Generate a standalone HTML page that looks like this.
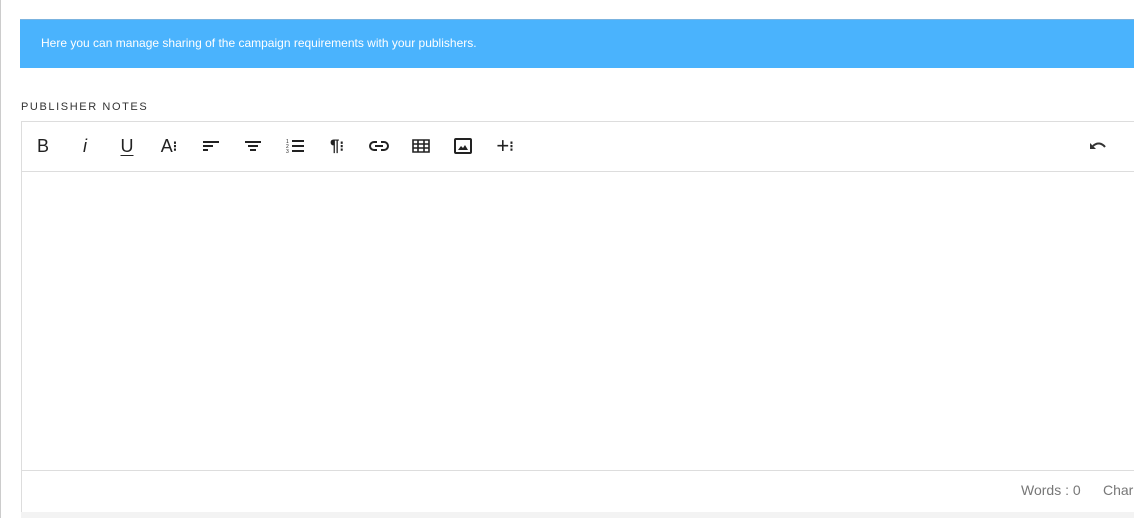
<!DOCTYPE html>
<html><head><style>
html,body{overflow:hidden}
body{margin:0;width:1134px;height:518px;background:#fff;font-family:"Liberation Sans",sans-serif;position:relative}
.lb{position:absolute;left:0;top:0;width:1px;height:518px;background:#ccc}
.banner{position:absolute;left:20px;top:19px;width:1114px;height:49px;background:#4ab3fd;border-top:1px solid #7bb3df;box-sizing:border-box;color:#fff;font-size:12px;line-height:47px;padding-left:21px}
.label{position:absolute;left:21px;top:101px;font-size:11px;letter-spacing:1.6px;color:#333}
.ed{position:absolute;left:21px;top:121px;width:1113px;height:392px;border:1px solid #ddd;border-right:none;box-sizing:border-box;overflow:hidden}
.tb{position:absolute;left:0;top:0;right:0;height:49px;border-bottom:1px solid #ddd}
.ft{position:absolute;left:0;bottom:0;right:0;height:41px;border-top:1px solid #ddd;font-size:14px;color:#777;white-space:nowrap}
.ic{position:absolute;top:13px;width:22px;height:22px;display:flex;align-items:center;justify-content:center;color:#222;font-size:18px}
.grey{position:absolute;left:21px;top:512px;width:1113px;height:6px;background:#f3f3f3}
</style></head><body>
<div class="lb"></div>
<div class="banner">Here you can manage sharing of the campaign requirements with your publishers.</div>
<div class="label">PUBLISHER NOTES</div>
<div class="ed">
<div class="tb">
<div class="ic" style="left:10px">B</div>
<div class="ic" style="left:52px;font-style:italic;font-size:18px">i</div>
<div class="ic" style="left:94px;text-decoration:underline;text-underline-offset:3px">U</div>
<div class="ic" style="left:136px">A<span style="font-size:14px;font-weight:bold">⁝</span></div>
<svg class="ic" style="left:178px" viewBox="0 0 22 22"><path d="M3 7h16M3 11h10M3 15h5" stroke="#222" stroke-width="2"/></svg>
<svg class="ic" style="left:220px" viewBox="0 0 22 22"><path d="M3 7h16M6 11h10M8 15h6" stroke="#222" stroke-width="2"/></svg>
<svg class="ic" style="left:262px" viewBox="0 0 22 22"><path d="M8 6h12M8 11h12M8 16h12" stroke="#222" stroke-width="2"/><text x="2" y="8" font-size="5" fill="#222">1</text><text x="2" y="13" font-size="5" fill="#222">2</text><text x="2" y="18" font-size="5" fill="#222">3</text></svg>
<div class="ic" style="left:304px;font-weight:bold;font-size:17px">¶<span style="font-size:14px">⁝</span></div>
<svg class="ic" style="left:346px" viewBox="0 0 22 22"><path d="M9 7H6a4 4 0 0 0 0 8h3M13 7h3a4 4 0 0 1 0 8h-3M7 11h8" stroke="#222" stroke-width="2" fill="none"/></svg>
<svg class="ic" style="left:388px" viewBox="0 0 22 22"><path d="M3 5h16v12H3zM3 9h16M3 13h16M8 5v12M14 5v12" stroke="#222" stroke-width="1.6" fill="none"/></svg>
<svg class="ic" style="left:430px" viewBox="0 0 22 22"><rect x="3" y="4" width="16" height="14" rx="1" stroke="#222" stroke-width="2" fill="none"/><path d="M6 15l3-4 2 2 2-3 3 5z" fill="#222"/></svg>
<div class="ic" style="left:472px;font-size:22px">+<span style="font-size:14px;font-weight:bold">⁝</span></div>
<svg class="ic" style="left:1065px" viewBox="0 0 22 22"><path d="M6 11c4-4 9-3 12 1" stroke="#333" stroke-width="2" fill="none"/><path d="M3 8v6h6z" fill="#333"/></svg>
</div>
<div class="ft"><span style="position:absolute;left:999px;top:11px">Words : 0</span><span style="position:absolute;left:1081px;top:11px">Characters : 0</span></div>
</div>
<div class="grey"></div>
</body></html>
